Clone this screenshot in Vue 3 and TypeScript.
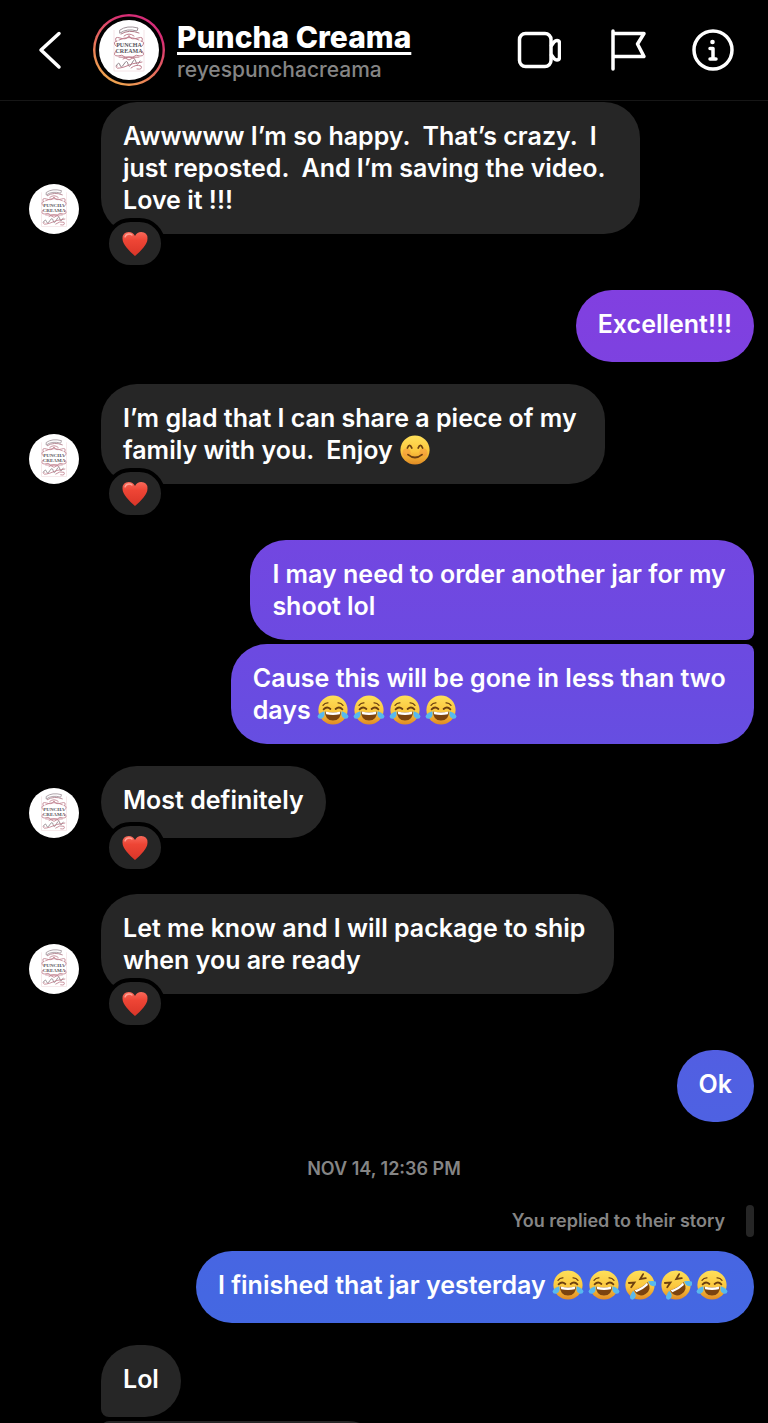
<script setup lang="ts">
import { defineComponent, h } from 'vue'

type EmojiName = 'joy' | 'rofl' | 'blush'
type Part = string | { emoji: EmojiName }

interface Message {
  kind: 'message'
  mine: boolean
  lines: Part[][]
  avatar?: boolean
  heart?: boolean
  shape?: 'first' | 'last'
}
interface Stamp {
  kind: 'stamp'
  text: string
}
interface Note {
  kind: 'note'
  text: string
}
type Entry = Message | Stamp | Note

const joy: Part = { emoji: 'joy' }
const rofl: Part = { emoji: 'rofl' }
const blush: Part = { emoji: 'blush' }

const entries: Entry[] = [
  {
    kind: 'message',
    mine: false,
    avatar: true,
    heart: true,
    lines: [
      ['Awwwww I’m so happy.  That’s crazy.  I'],
      ['just reposted.  And I’m saving the video.  '],
      ['Love it !!!'],
    ],
  },
  { kind: 'message', mine: true, lines: [['Excellent!!!']] },
  {
    kind: 'message',
    mine: false,
    avatar: true,
    heart: true,
    lines: [['I’m glad that I can share a piece of my '], ['family with you.  Enjoy ', blush]],
  },
  {
    kind: 'message',
    mine: true,
    shape: 'first',
    lines: [['I may need to order another jar for my '], ['shoot lol']],
  },
  {
    kind: 'message',
    mine: true,
    shape: 'last',
    lines: [['Cause this will be gone in less than two '], ['days ', joy, joy, joy, joy]],
  },
  { kind: 'message', mine: false, avatar: true, heart: true, lines: [['Most definitely']] },
  {
    kind: 'message',
    mine: false,
    avatar: true,
    heart: true,
    lines: [['Let me know and I will package to ship '], ['when you are ready']],
  },
  { kind: 'message', mine: true, lines: [['Ok']] },
  { kind: 'stamp', text: 'NOV 14, 12:36 PM' },
  { kind: 'note', text: 'You replied to their story' },
  { kind: 'message', mine: true, lines: [['I finished that jar yesterday ', joy, joy, rofl, rofl, joy]] },
  { kind: 'message', mine: false, shape: 'first', lines: [['Lol']] },
  { kind: 'message', mine: false, shape: 'last', lines: [['                                      ']] },
]

const faceLabels: Record<EmojiName, string> = {
  joy: 'face with tears of joy',
  rofl: 'rolling on the floor laughing',
  blush: 'smiling face with smiling eyes',
}

const line = (d: string, width = 1.8) =>
  h('path', { d, fill: 'none', stroke: '#6b3f10', 'stroke-width': width, 'stroke-linecap': 'round' })

const mouth = () => [
  h('path', { d: 'M8 17.5Q16 19.5 24 17.5Q24 26.5 16 26.5Q8 26.5 8 17.5Z', fill: '#7b430f' }),
  h('path', { d: 'M8.6 17.6Q16 19.6 23.4 17.6L22.8 20.2Q16 21.6 9.2 20.2Z', fill: '#fff' }),
]

const tears = () => [
  h('path', { d: 'M7.2 17.2Q8.6 22.6 4.8 24.4Q1 25.4 .6 22.4Q.6 19.8 7.2 17.2Z', fill: '#58b9ee' }),
  h('path', { d: 'M24.8 17.2Q23.4 22.6 27.2 24.4Q31 25.4 31.4 22.4Q31.4 19.8 24.8 17.2Z', fill: '#58b9ee' }),
]

const Emoji = defineComponent({
  props: { name: { type: String as () => EmojiName, required: true } },
  setup(props) {
    return () => {
      const face = h('circle', { cx: 16, cy: 16, r: 14.6, fill: 'url(#face-fill)' })
      const details =
        props.name === 'blush'
          ? [
              h('circle', { cx: 7.6, cy: 18.6, r: 4, fill: '#f58a3c', opacity: 0.45 }),
              h('circle', { cx: 24.4, cy: 18.6, r: 4, fill: '#f58a3c', opacity: 0.45 }),
              line('M8.4 14Q10.6 8.6 12.8 14'),
              line('M19.2 14Q21.4 8.6 23.6 14'),
              line('M9 20.6Q16 26.4 23 20.6'),
            ]
          : props.name === 'joy'
            ? [
                line('M6 11.4Q8 8.6 11 8.8', 1.2),
                line('M26 11.4Q24 8.6 21 8.8', 1.2),
                line('M6.6 15.4Q9.8 11.8 13.4 15'),
                line('M25.4 15.4Q22.2 11.8 18.6 15'),
                ...mouth(),
                ...tears(),
              ]
            : [
                h('g', { transform: 'rotate(-32 16 16)' }, [
                  line('M7.6 8.4L12.6 11L7.4 13.2'),
                  line('M24.4 8.4L19.4 11L24.6 13.2'),
                  ...mouth(),
                  ...tears(),
                ]),
              ]
      return h('svg', { viewBox: '0 0 32 32', role: 'img', 'aria-label': faceLabels[props.name] }, [
        face,
        ...details,
      ])
    }
  },
})

const swirl = (d: string, stroke = '#c07f8e', width = 1) =>
  h('path', { d, fill: 'none', stroke, 'stroke-width': width, 'stroke-linecap': 'round' })

const BrandMark = defineComponent({
  setup() {
    const word = (y: number, text: string) =>
      h(
        'text',
        {
          x: 30,
          y,
          'text-anchor': 'middle',
          'font-family': '"Liberation Serif", serif',
          'font-size': 6,
          'font-weight': 700,
          fill: '#55525a',
        },
        text,
      )
    return () =>
      h('svg', { viewBox: '0 0 60 60', role: 'img', 'aria-label': 'Reyes Puncha Creama' }, [
        h('circle', { cx: 30, cy: 30, r: 30, fill: '#fff' }),
        h('path', { d: 'M15 10V51H45V10', fill: 'none', stroke: '#f5e4e7', 'stroke-width': 1 }),
        swirl('M21 10Q28 5 39 8L38 11Q28 8 21 13Z', '#a0939a'),
        swirl('M22 14Q30 9 40 13', '#ad7885'),
        swirl('M17 21Q15 16 21 18T29 17Q30 14 31 17T39 18Q45 16 43 21'),
        swirl('M20 20Q30 15 40 20M25 16Q30 12 35 16'),
        swirl('M18 21Q13 22 17 26M42 21Q47 22 43 26'),
        word(27, 'PUNCHA'),
        word(33, 'CREAMA'),
        swirl('M17 31Q13 36 19 36Q23 34 26 37H34Q37 34 41 36Q47 36 43 31'),
        swirl('M20 37Q25 36 30 40Q35 36 40 37M24 39Q30 35 36 39'),
        swirl('M17 46Q20 41 21 45T25 44T29 44T33 43T37 42T41 41', '#8f848a'),
        swirl('M43 42Q33 43 25 47Q15 50 18 46M32 48Q37 44 42 46Q44 50 38 49'),
      ])
  },
})
</script>

<template>
  <div class="chat">
    <svg class="defs" aria-hidden="true">
      <defs>
        <linearGradient id="face-fill" x1="0" y1="0" x2="0" y2="1">
          <stop offset="0" stop-color="#ffe05a" />
          <stop offset="0.55" stop-color="#fbc73e" />
          <stop offset="1" stop-color="#e08a24" />
        </linearGradient>
        <linearGradient id="heart-fill" x1="0" y1="0" x2="0" y2="1">
          <stop offset="0" stop-color="#f8695a" />
          <stop offset="0.35" stop-color="#ee4535" />
          <stop offset="1" stop-color="#d93528" />
        </linearGradient>
      </defs>
    </svg>

    <header class="bar">
      <button class="icon back" type="button" aria-label="Back">
        <svg viewBox="0 0 44 44"><path d="M31 5.5L13 22L31 39" /></svg>
      </button>
      <div class="ring">
        <BrandMark class="ring-mark" />
      </div>
      <div class="who">
        <h1><a href="#profile">Puncha Creama</a></h1>
        <p>reyespunchacreama</p>
      </div>
      <nav class="actions" aria-label="Conversation actions">
        <button class="icon" type="button" aria-label="Video call">
          <svg viewBox="0 0 44 44">
            <rect x="2.5" y="5.5" width="31.5" height="33" rx="6" />
            <path d="M34.500 17.500L37 14Q38.500 12.500 40 12.500Q42.500 12.500 42.500 15.500V29Q42.500 32 40 32Q38.500 32 37 30.500L34.500 27" />
          </svg>
        </button>
        <button class="icon" type="button" aria-label="Flag conversation">
          <svg viewBox="0 0 44 44">
            <path d="M9 3V41M9 5.500H40L33.500 16L40 28.500H9" />
          </svg>
        </button>
        <button class="icon" type="button" aria-label="Conversation details">
          <svg viewBox="0 0 44 44">
            <circle cx="22" cy="22" r="19" />
            <circle class="dot" cx="21.500" cy="14" r="2.300" />
            <path d="M19 20.500H22V30.500M19 31H25" />
          </svg>
        </button>
      </nav>
    </header>

    <main class="thread">
      <template v-for="(entry, i) in entries" :key="i">
        <p v-if="entry.kind === 'stamp'" class="stamp">{{ entry.text }}</p>
        <p v-else-if="entry.kind === 'note'" class="note">
          <span>{{ entry.text }}</span>
        </p>
        <div
          v-else
          class="row"
          :class="[entry.mine ? 'mine' : 'theirs', entry.shape, { reacted: entry.heart }]"
        >
          <div v-if="!entry.mine" class="gutter">
            <BrandMark v-if="entry.avatar" class="avatar" />
          </div>
          <div class="bubble">
            <p v-for="(parts, n) in entry.lines" :key="n">
              <template v-for="(part, k) in parts" :key="k">
                <template v-if="typeof part === 'string'">{{ part }}</template>
                <Emoji v-else class="emoji" :name="part.emoji" />
              </template>
            </p>
            <span v-if="entry.heart" class="reaction">
              <svg viewBox="0 0 26 26" role="img" aria-label="Heart reaction">
                <path
                  d="M13 25Q9 22 4.500 16.500Q.5 11.500 .5 7.500Q.5 1 6.800 1Q11 1 13 5Q15 1 19.200 1Q25.500 1 25.500 7.500Q25.500 11.500 21.500 16.500Q17 22 13 25Z"
                  fill="url(#heart-fill)"
                />
                <path d="M3 6Q4 3 7 3Q9 3 10 4" fill="none" stroke="#ffa294" stroke-width="1.300" stroke-linecap="round" />
              </svg>
            </span>
          </div>
        </div>
      </template>
    </main>
  </div>
</template>

<style>
body {
  margin: 0;
  background: #000;
}
</style>

<style scoped>
.chat {
  height: 100vh;
  overflow: hidden;
  background: #000;
  color: #fff;
  font-family: Inter, "Liberation Sans", sans-serif;
}
.defs {
  position: absolute;
  width: 0;
  height: 0;
}
p,
h1 {
  margin: 0;
}

.bar {
  display: flex;
  align-items: center;
  box-sizing: border-box;
  height: 101px;
  padding: 0 33px 0 28px;
  border-bottom: 1px solid #161616;
}
.icon {
  display: block;
  width: 44px;
  height: 44px;
  padding: 0;
  border: 0;
  background: none;
  color: #fff;
  cursor: pointer;
}
.icon svg {
  display: block;
  width: 44px;
  height: 44px;
  fill: none;
  stroke: currentColor;
  stroke-width: 3.5;
  stroke-linecap: round;
  stroke-linejoin: round;
}
.icon .dot {
  fill: currentColor;
  stroke: none;
}
.ring {
  box-sizing: border-box;
  width: 72px;
  height: 72px;
  margin: 0 12px 0 21px;
  padding: 6px;
  border-radius: 50%;
  background:
    radial-gradient(circle, #000 0 33px, transparent 34px),
    linear-gradient(30deg, #f2b34c 5%, #e9775a 38%, #d92f73 75%, #cf2a80);
}
.ring-mark {
  display: block;
  width: 60px;
  height: 60px;
}
.who {
  flex: 1;
  min-width: 0;
  padding-top: 4px;
}
.who h1 {
  font-size: 30px;
  line-height: 36px;
  font-weight: 800;
  white-space: nowrap;
}
.who a {
  color: #fff;
  text-decoration: underline;
  text-decoration-thickness: 3px;
  text-underline-offset: 4px;
  text-decoration-skip-ink: none;
}
.who p {
  font-size: 21px;
  line-height: 30px;
  font-weight: 500;
  color: #858585;
}
.actions {
  display: flex;
  gap: 43px;
}

.thread {
  display: flex;
  flex-direction: column;
  padding: 1px 14px 0 29px;
}
.row {
  display: flex;
  align-items: flex-end;
  margin-bottom: 22px;
}
.row.mine {
  justify-content: flex-end;
}
.row.reacted {
  margin-bottom: 56px;
}
.row.first {
  margin-bottom: 4px;
}
.gutter {
  flex: none;
  width: 72px;
}
.avatar {
  display: block;
  width: 50px;
  height: 50px;
}
.bubble {
  position: relative;
  box-sizing: border-box;
  min-height: 72px;
  padding: 18px 22px;
  border-radius: 36px;
  background: #262626;
  font-size: 25px;
  line-height: 32px;
  font-weight: 600;
}
.bubble p {
  height: 32px;
  white-space: pre;
}
.mine .bubble {
  background: linear-gradient(#9037de 0%, #8040e0 22%, #6a4be1 48%, #5060e2 76%, #4567e2 91%, #4069e2) fixed;
}
.theirs.first .bubble {
  border-bottom-left-radius: 8px;
}
.theirs.last .bubble {
  border-top-left-radius: 8px;
}
.mine.first .bubble {
  border-bottom-right-radius: 8px;
}
.mine.last .bubble {
  border-top-right-radius: 8px;
}
.emoji {
  width: 32px;
  height: 32px;
  margin-right: 4px;
  vertical-align: top;
}
.reaction {
  position: absolute;
  left: 4px;
  bottom: -35px;
  display: flex;
  align-items: center;
  justify-content: center;
  width: 52px;
  height: 43px;
  border: 4px solid #000;
  border-radius: 26px;
  background: #262626;
}
.reaction svg {
  width: 26px;
  height: 26px;
}
.stamp {
  margin: 12px 0 23px;
  padding-right: 15px;
  text-align: center;
  font-size: 18px;
  line-height: 26px;
  font-weight: 600;
  color: #858585;
}
.note {
  display: flex;
  justify-content: flex-end;
  align-items: center;
  margin-bottom: 14px;
  font-size: 18px;
  line-height: 32px;
  font-weight: 600;
  color: #858585;
}
.note::after {
  content: "";
  width: 8px;
  height: 32px;
  margin-left: 21px;
  border-radius: 4px;
  background: #262626;
}
</style>
